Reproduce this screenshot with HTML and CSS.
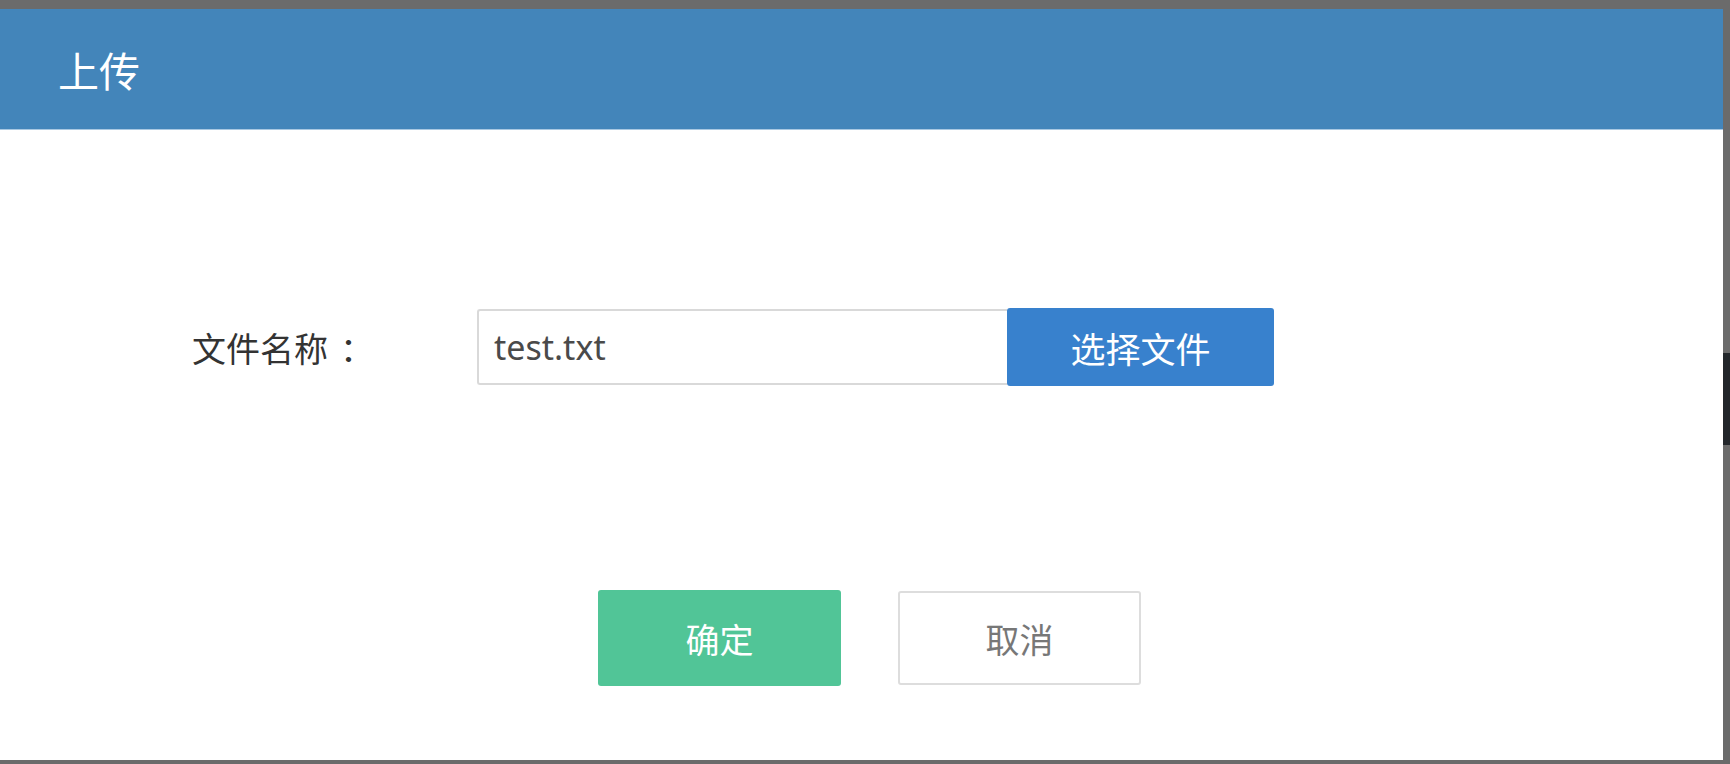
FILE: index.html
```html
<!DOCTYPE html>
<html lang="zh-CN">
<head>
<meta charset="utf-8">
<title>上传</title>
<link rel="stylesheet" href="styles.css">
</head>
<body>
<div class="screen">
  <div class="dialog">
    <div class="dialog-header">上传</div>
    <div class="dialog-body">
      <div class="form-row">
        <label class="form-label">文件名称<span class="colon">：</span></label>
        <div class="file-field">
          <div class="file-input">test.txt</div>
          <button class="btn btn-choose">选择文件</button>
        </div>
      </div>
      <div class="actions">
        <button class="btn btn-ok">确定</button>
        <button class="btn btn-cancel">取消</button>
      </div>
    </div>
  </div>
  <div class="side-strip">
    <div class="side-thumb"></div>
  </div>
</div>
</body>
</html>
```
FILE: styles.css
```css
html, body {
  margin: 0;
  padding: 0;
}
body {
  width: 1730px;
  height: 764px;
  overflow: hidden;
  background: #6b6b6b;
  font-family: "Noto Sans", "Noto Sans CJK SC", sans-serif;
}
.screen {
  display: flex;
  padding-top: 9px;
  height: 755px;
}
.dialog {
  width: 1723px;
  height: 751px;
  background: #ffffff;
  display: flex;
  flex-direction: column;
}
.dialog-header {
  height: 120px;
  background: #4385ba;
  border-bottom: 1px solid #a9c8e2;
  color: #ffffff;
  font-size: 41px;
  display: flex;
  align-items: center;
  padding-left: 58px;
  box-sizing: content-box;
}
.dialog-body {
  flex: 1;
  display: flex;
  flex-direction: column;
}
.form-row {
  display: flex;
  align-items: center;
  margin-top: 178px;
  padding-left: 192px;
}
.form-label {
  width: 285px;
  font-size: 34px;
  color: #333333;
}
.colon {
  margin-left: 12px;
}
.file-field {
  display: flex;
  align-items: center;
}
.file-input {
  width: 513px;
  height: 72px;
  border: 2px solid #d9d9d9;
  border-right: none;
  border-radius: 3px 0 0 3px;
  display: flex;
  align-items: center;
  padding-left: 15px;
  font-size: 34px;
  color: #4a4a4a;
}
.btn {
  font-family: "Noto Sans", "Noto Sans CJK SC", sans-serif;
  border: none;
  margin: 0;
  padding: 0;
  cursor: pointer;
}
.btn-choose {
  width: 267px;
  height: 78px;
  background: #3881cd;
  color: #ffffff;
  font-size: 35px;
  border-radius: 3px;
}
.actions {
  display: flex;
  margin-top: 204px;
  padding-left: 598px;
  gap: 57px;
  align-items: center;
}
.btn-ok {
  width: 243px;
  height: 96px;
  background: #51c597;
  color: #ffffff;
  font-size: 34px;
  border-radius: 3px;
}
.btn-cancel {
  width: 243px;
  height: 94px;
  background: #ffffff;
  border: 2px solid #dddddd;
  color: #777777;
  font-size: 34px;
  border-radius: 3px;
}
.side-strip {
  width: 7px;
  display: flex;
  flex-direction: column;
  padding-top: 344px;
}
.side-thumb {
  height: 92px;
  background: #23272b;
}
```
